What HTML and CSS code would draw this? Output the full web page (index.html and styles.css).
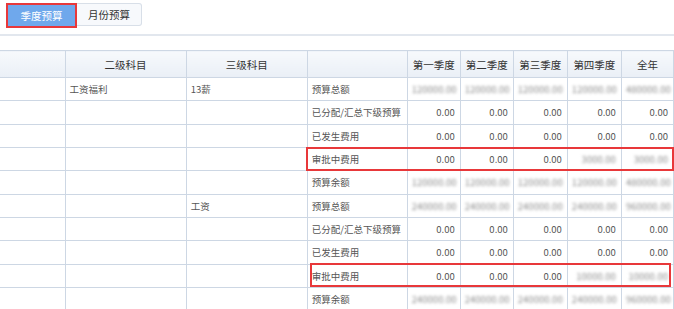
FILE: index.html
```html
<!DOCTYPE html>
<html lang="zh-CN">
<head>
<meta charset="utf-8">
<title>预算</title>
<link rel="stylesheet" href="styles.css">
</head>
<body>
<div class="tabs">
  <button class="tab tab-active">季度预算</button>
  <button class="tab">月份预算</button>
</div>
<div class="grid-wrap">
  <table class="budget">
    <colgroup>
      <col class="c0"><col class="c1"><col class="c2"><col class="c3">
      <col class="cq"><col class="cq"><col class="cq4"><col class="cq4"><col class="cy">
    </colgroup>
    <thead>
      <tr><th></th><th>二级科目</th><th>三级科目</th><th></th><th>第一季度</th><th>第二季度</th><th>第三季度</th><th>第四季度</th><th>全年</th></tr>
    </thead>
    <tbody>
      <tr><td></td><td>工资福利</td><td>13薪</td><td>预算总额</td><td class="n"><span class="b">120000.00</span></td><td class="n"><span class="b">120000.00</span></td><td class="n"><span class="b">120000.00</span></td><td class="n"><span class="b">120000.00</span></td><td class="n"><span class="b">480000.00</span></td></tr>
      <tr><td></td><td></td><td></td><td>已分配/汇总下级预算</td><td class="n">0.00</td><td class="n">0.00</td><td class="n">0.00</td><td class="n">0.00</td><td class="n">0.00</td></tr>
      <tr><td></td><td></td><td></td><td>已发生费用</td><td class="n">0.00</td><td class="n">0.00</td><td class="n">0.00</td><td class="n">0.00</td><td class="n">0.00</td></tr>
      <tr><td></td><td></td><td></td><td>审批中费用</td><td class="n">0.00</td><td class="n">0.00</td><td class="n">0.00</td><td class="n"><span class="b">3000.00</span></td><td class="n"><span class="b">3000.00</span></td></tr>
      <tr><td></td><td></td><td></td><td>预算余额</td><td class="n"><span class="b">120000.00</span></td><td class="n"><span class="b">120000.00</span></td><td class="n"><span class="b">120000.00</span></td><td class="n"><span class="b">120000.00</span></td><td class="n"><span class="b">480000.00</span></td></tr>
      <tr><td></td><td></td><td>工资</td><td>预算总额</td><td class="n"><span class="b">240000.00</span></td><td class="n"><span class="b">240000.00</span></td><td class="n"><span class="b">240000.00</span></td><td class="n"><span class="b">240000.00</span></td><td class="n"><span class="b">960000.00</span></td></tr>
      <tr><td></td><td></td><td></td><td>已分配/汇总下级预算</td><td class="n">0.00</td><td class="n">0.00</td><td class="n">0.00</td><td class="n">0.00</td><td class="n">0.00</td></tr>
      <tr><td></td><td></td><td></td><td>已发生费用</td><td class="n">0.00</td><td class="n">0.00</td><td class="n">0.00</td><td class="n">0.00</td><td class="n">0.00</td></tr>
      <tr><td></td><td></td><td></td><td>审批中费用</td><td class="n">0.00</td><td class="n">0.00</td><td class="n">0.00</td><td class="n"><span class="b">10000.00</span></td><td class="n"><span class="b">10000.00</span></td></tr>
      <tr><td></td><td></td><td></td><td>预算余额</td><td class="n"><span class="b">240000.00</span></td><td class="n"><span class="b">240000.00</span></td><td class="n"><span class="b">240000.00</span></td><td class="n"><span class="b">240000.00</span></td><td class="n"><span class="b">960000.00</span></td></tr>
    </tbody>
  </table>
  <div class="mark mark-1"></div>
  <div class="mark mark-2"></div>
</div>
</body>
</html>
```
FILE: styles.css
```css
html, body {
  margin: 0;
  padding: 0;
  background: #fff;
}
body {
  font-family: "Noto Sans CJK SC", "Microsoft YaHei", sans-serif;
  font-size: 9.5px;
  color: #555;
  overflow: hidden;
}
.tabs {
  display: flex;
  align-items: flex-start;
  height: 31px;
  padding: 3px 0 0 6px;
  border-bottom: 2px solid #e2e7ee;
}
.tab {
  box-sizing: border-box;
  width: 65px;
  height: 23px;
  margin: 0;
  padding: 0;
  font-family: inherit;
  font-size: 10.5px;
  color: #333;
  background: #f7f9fc;
  border: 1px solid #d8dfe8;
  border-left: none;
  border-radius: 0 3px 3px 0;
}
.tab-active {
  width: 71px;
  height: 25px;
  color: #fff;
  background: #6fa8ec;
  border: 2px solid #e8383a;
  border-radius: 0;
}
.grid-wrap {
  position: relative;
  margin-top: 14px;
}
.budget {
  table-layout: fixed;
  border-collapse: collapse;
  width: 674px;
}
.c0 { width: 65px; }
.c1 { width: 121px; }
.c2 { width: 121px; }
.c3 { width: 100px; }
.cq { width: 53px; }
.cq4 { width: 54px; }
.cy { width: 52px; }
.budget th,
.budget td {
  border: 1px solid #cdd7e4;
  padding: 0 4px;
  white-space: nowrap;
  overflow: hidden;
}
.budget th:first-child,
.budget td:first-child {
  border-left: none;
}
.budget th {
  height: 26px;
  font-size: 10.5px;
  font-weight: normal;
  color: #333;
  text-align: center;
  background: linear-gradient(#f7f9fc, #eaeff6);
}
.budget td {
  height: 22.33px;
  text-align: left;
}
.budget td.n {
  text-align: right;
  padding-right: 5px;
  font-size: 9.5px;
}
.b {
  display: inline-block;
  color: #8c8c8c;
  filter: blur(1.4px);
}
.mark {
  position: absolute;
  box-sizing: border-box;
  border: 2px solid #e8383a;
}
.mark-1 {
  left: 306px;
  top: 97px;
  width: 368px;
  height: 24px;
}
.mark-2 {
  left: 310px;
  top: 213px;
  width: 361px;
  height: 24px;
}
```
